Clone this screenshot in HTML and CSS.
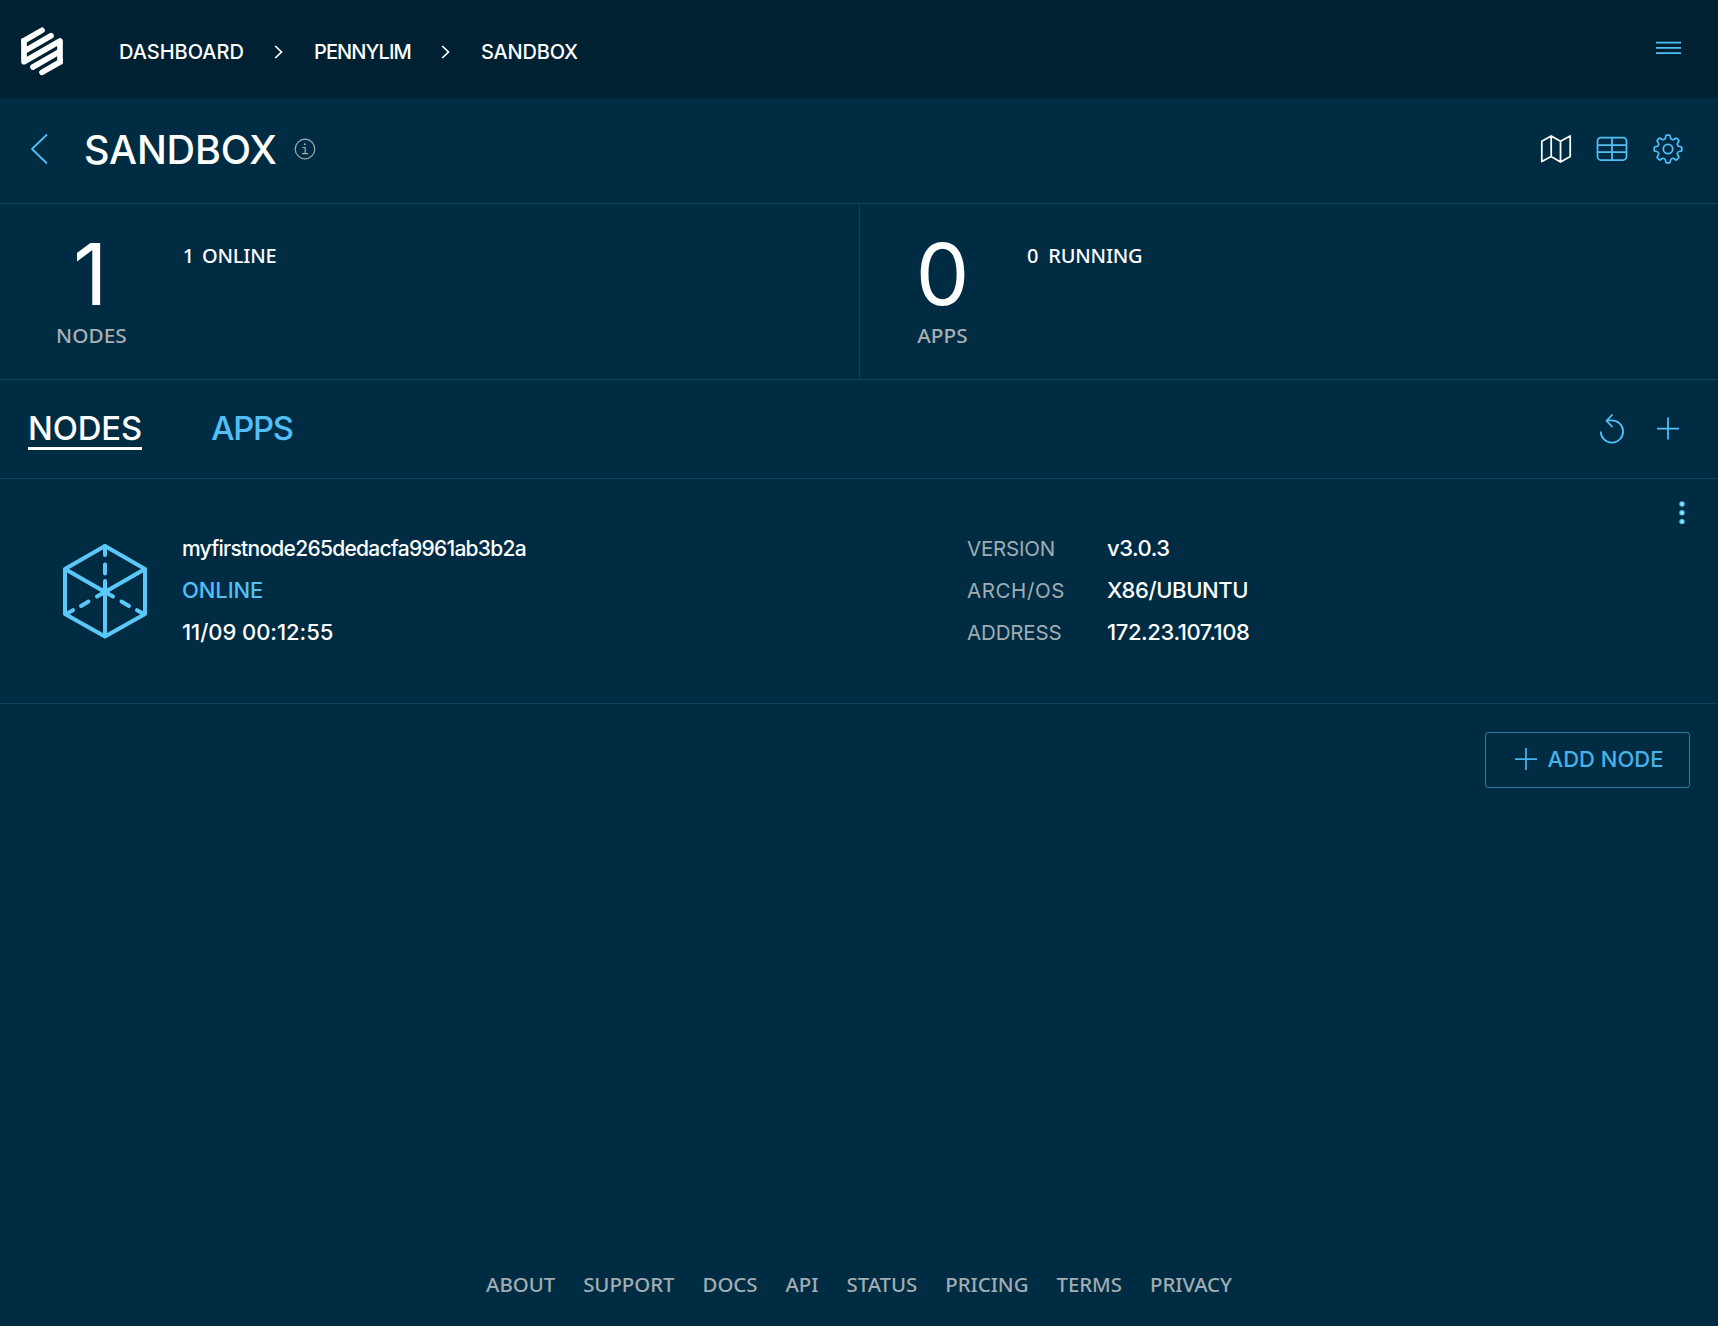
FILE: index.html
```html
<!DOCTYPE html>
<html lang="en">
<head>
<meta charset="utf-8">
<title>Sandbox</title>
<link rel="stylesheet" href="styles.css">
</head>
<body>
<header class="topbar">
  <svg class="logo" viewBox="33 23 126 146" width="42" height="48.7" fill="none" stroke="#fff" stroke-width="17" stroke-linecap="round" stroke-linejoin="round">
    <path d="M96 33L42 64V127L150 65V128L96 159M42 96L123 49M69 143L150 96"/>
    <path d="M37 60v12M155 120v12" stroke-width="7"/>
  </svg>
  <nav class="crumbs">
    <a class="crumb-dash">DASHBOARD</a>
    <svg class="sep" width="10" height="14" viewBox="0 0 10 14"><path d="M1.200 1 7.500 7 1.200 13"/></svg>
    <a class="crumb-user">PENNYLIM</a>
    <svg class="sep" width="10" height="14" viewBox="0 0 10 14"><path d="M1.200 1 7.500 7 1.200 13"/></svg>
    <a class="crumb-project">SANDBOX</a>
  </nav>
  <svg class="menu icon" width="26" height="14" viewBox="0 0 26 14"><path d="M0 1.500h25M0 6.800h25M0 12.100h25"/></svg>
</header>
<main>
  <section class="titlebar">
    <svg class="back icon" width="18" height="32" viewBox="0 0 18 32"><path d="M17 1.500 2 16 17 30.500"/></svg>
    <h1>SANDBOX</h1>
    <svg class="info" width="22" height="22" viewBox="0 0 22 22"><circle cx="11" cy="11" r="9.800"/><path d="M8.500 9.500h2.700v6M8 15.600h6"/><circle class="dot" cx="10.800" cy="6.300" r="1"/></svg>
    <div class="tools">
      <svg class="icon active" width="32" height="32" viewBox="0 0 32 32"><path d="M1.800 8.200 11.200 3 20.500 8.200 30.200 3V23.500L20.500 29 11.200 23.500 1.800 28.500ZM11.200 3v20.500M20.500 8.200V29"/></svg>
      <svg class="icon" width="32" height="32" viewBox="0 0 32 32"><rect x="1.500" y="4.500" width="29" height="22.500" rx="3.500"/><path d="M1.500 12h29M1.500 19h29M16 4.500V27"/></svg>
      <svg class="icon" width="32" height="32" viewBox="-16 -16 32 32">
        <defs><path id="tooth" d="M-3.900-9.500Q-2.800-9.900-2.500-11.400L-2.200-12.900Q-2-13.800-1.200-13.800H1.200Q2-13.800 2.200-12.900L2.500-11.400Q2.800-9.900 3.900-9.500"/></defs>
        <use href="#tooth"/><use href="#tooth" transform="rotate(45)"/><use href="#tooth" transform="rotate(90)"/><use href="#tooth" transform="rotate(135)"/><use href="#tooth" transform="rotate(180)"/><use href="#tooth" transform="rotate(225)"/><use href="#tooth" transform="rotate(270)"/><use href="#tooth" transform="rotate(315)"/>
        <circle r="4.700"/>
      </svg>
    </div>
  </section>
  <section class="stats">
    <div class="stat">
      <div class="total"><strong class="one">1</strong><span>NODES</span></div>
      <p><b>1</b>ONLINE</p>
    </div>
    <div class="stat">
      <div class="total"><strong>0</strong><span>APPS</span></div>
      <p><b>0</b>RUNNING</p>
    </div>
  </section>
  <section class="tabs">
    <a class="tab selected">NODES</a>
    <a class="tab tab-apps">APPS</a>
    <div class="actions">
      <svg class="icon" width="28" height="32" viewBox="0 0 28 32"><path d="M2.700 18.500A11.200 11.200 0 1 0 13.500 7.300H8.500M14.500 1.500 8.500 7.800 14.500 14"/></svg>
      <svg class="icon" width="24" height="24" viewBox="0 0 24 24"><path d="M1 11.500h22M12 .5v22"/></svg>
    </div>
  </section>
  <section class="node">
    <svg class="cube" width="86" height="96" viewBox="0 0 86 96">
      <path d="M43 3 83 26V71L43 93.500 3 71V26ZM3 26 43 49 83 26M43 49V93.500"/>
      <path d="M43 3V12M43 21.500v9M43 38v11M43 49 35 53.600M26.500 58.500 19 63M11 67.200 4 71M43 49 51 53.600M59.500 58.500 67 63M75 67.200 82 71"/>
      <circle cx="43" cy="48.500" r="2.500"/>
    </svg>
    <div class="summary">
      <div class="name">myfirstnode265dedacfa9961ab3b2a</div>
      <div class="state">ONLINE</div>
      <div class="time">11/09 00:12:55</div>
    </div>
    <dl class="facts">
      <dt class="l1">VERSION</dt><dd class="v1">v3.0.3</dd>
      <dt class="l2">ARCH/OS</dt><dd class="v2">X86/UBUNTU</dd>
      <dt class="l3">ADDRESS</dt><dd class="v3">172.23.107.108</dd>
    </dl>
    <svg class="more" width="8" height="26" viewBox="0 0 8 26"><circle cx="4" cy="4" r="2.700"/><circle cx="4" cy="12.800" r="2.700"/><circle cx="4" cy="21.600" r="2.700"/><g fill="#fff" opacity=".7"><circle cx="4" cy="4" r="1.100"/><circle cx="4" cy="12.800" r="1.100"/><circle cx="4" cy="21.600" r="1.100"/></g></svg>
  </section>
  <div class="add">
    <button type="button"><svg class="icon" width="22" height="22" viewBox="0 0 22 22"><path d="M0 11h22M11 0v22"/></svg>ADD NODE</button>
  </div>
</main>
<footer>
  <a>ABOUT</a><a>SUPPORT</a><a>DOCS</a><a>API</a><a>STATUS</a><a>PRICING</a><a>TERMS</a><a>PRIVACY</a>
</footer>
</body>
</html>
```
FILE: styles.css
```css
* { box-sizing: border-box; }
body {
  margin: 0;
  min-height: 1326px;
  display: flex;
  flex-direction: column;
  background: #002c43;
  color: #fff;
  font-family: Inter, "Liberation Sans", sans-serif;
  font-weight: 500;
}
svg { display: block; flex: none; }
.icon { fill: none; stroke: #52c0f7; stroke-width: 1.75; stroke-linejoin: round; }
.icon.active { stroke: #fff; }

.topbar {
  height: 98px;
  padding: 6px 36px 0 21px;
  display: flex;
  align-items: center;
  background: #002131;
}
.crumbs { display: flex; align-items: center; margin-left: 56px; font-size: 20px; line-height: 28px; }
.sep { margin: 0 30px 0 31px; fill: none; stroke: #fff; stroke-width: 1.7; }
.crumb-dash { width: 124px; }
.crumb-user { width: 96px; letter-spacing: -.9px; white-space: nowrap; }
.crumb-project { letter-spacing: -.2px; }
.menu { margin-left: auto; margin-bottom: 8px; }
.logo { margin-bottom: 1px; }

.titlebar {
  height: 106px;
  padding: 0 34px 2px 30px;
  display: flex;
  align-items: center;
  border-bottom: 1px solid #0d425c;
}
h1 { margin: 0 0 0 36px; width: 193px; font-size: 39.500px; line-height: 50px; font-weight: 500; letter-spacing: -.2px; }
.back { margin-bottom: 1px; }
.info { margin: 0 0 1px 16.500px; fill: none; stroke: #a1acb3; stroke-width: 1.2; }
.info .dot { fill: #a1acb3; stroke: none; }
.tools { display: flex; gap: 24px; margin-left: auto; padding-bottom: 1px; }

.stats { display: grid; grid-template-columns: 1fr 1fr; height: 176px; border-bottom: 1px solid #0d425c; }
.stat { display: flex; gap: 56px; padding: 28px 56px 0; font-family: "Noto Sans", sans-serif; font-size: 20px; line-height: 28px; }
.stat + .stat { border-left: 1px solid #0d425c; padding-left: 57px; gap: 59px; }
.total { display: flex; flex-direction: column; align-items: center; color: #a8afb5; font-size: 20.700px; }
.total strong { font: 400 85px/86px Inter, sans-serif; color: #fff; }
.total .one { transform: translateX(-1px); }
.total span { margin-top: 3px; letter-spacing: .1px; }
.stat + .stat .total { width: 51px; }
.stat p { margin: 10px 0 0; letter-spacing: -.2px; }
.stat b { font-weight: 500; margin-right: 8px; }
.stat + .stat b { margin-right: 10px; }

.tabs { height: 99px; padding: 0 38px 1px 28px; display: flex; align-items: center; border-bottom: 1px solid #0d425c; }
.tab { font-size: 32.800px; line-height: 37px; border-bottom: 3px solid transparent; margin-top: 2px; width: 114px; text-align: center; letter-spacing: -.1px; }
.selected { border-color: #fff; }
.tab-apps { margin-left: 69px; width: 82px; letter-spacing: -1.2px; color: #52c0f7; }
.actions { margin-left: auto; display: flex; align-items: center; gap: 30px; }

.node { position: relative; height: 225px; display: flex; align-items: center; padding-left: 62px; border-bottom: 1px solid #0d425c; line-height: 42px; font-size: 22px; white-space: nowrap; }
.cube { fill: none; stroke: #5bc8fa; stroke-width: 4; stroke-linecap: round; stroke-linejoin: round; }
.summary { width: 819px; padding: 0 0 2px 34px; }
.name { font-size: 21px; letter-spacing: -.73px; padding-top: 1px; margin-bottom: -1px; }
.state { color: #52c0f7; letter-spacing: -.1px; }
.time { letter-spacing: -.05px; }
.facts { margin: 0; padding-bottom: 2px; display: grid; grid-template-columns: 140px auto; }
dt { color: #a1acb3; font-size: 20.500px; font-weight: 400; padding-top: 1px; margin-bottom: -1px; }
dd { margin: 0; }
.l1 { letter-spacing: -.2px; }
.l2 { letter-spacing: .6px; }
.l3 { letter-spacing: -.15px; }
.v1 { letter-spacing: -.5px; }
.v2, .v3 { letter-spacing: -.4px; }
.more { position: absolute; right: 32px; top: 21px; fill: #5bc8fa; }

.add { display: flex; justify-content: flex-end; padding: 28px 28px 0; }
button {
  width: 205px;
  height: 56px;
  padding: 0 0 2px 3px;
  display: flex;
  align-items: center;
  justify-content: center;
  gap: 11px;
  border: 1px solid #2a7ba3;
  border-radius: 3px;
  background: none;
  color: #45b2e8;
  font: 500 22px/28px Inter, sans-serif;
  white-space: nowrap;
}
button .icon { stroke: #45b2e8; }

footer {
  margin-top: auto;
  height: 84px;
  padding-top: 28px;
  display: flex;
  justify-content: center;
  gap: 28px;
  font: 500 20.400px/28px "Noto Sans", sans-serif;
  letter-spacing: -.02px;
  color: #a1acb3;
}
```
